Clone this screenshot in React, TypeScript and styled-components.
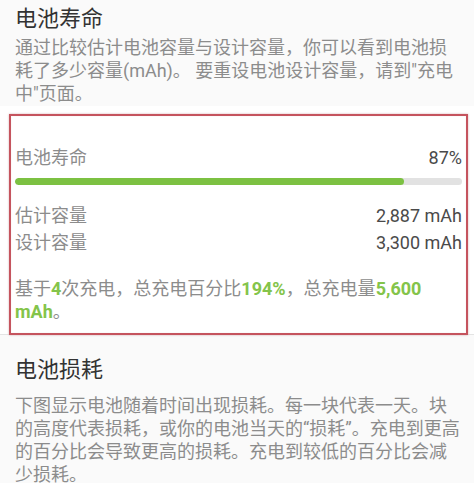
import React from "react";
import styled, { createGlobalStyle } from "styled-components";

const GlobalStyle = createGlobalStyle`
  html, body {
    margin: 0;
    padding: 0;
    background: #fafafa;
  }
  body {
    font-family: Roboto, "Noto Sans CJK SC", "Noto Sans", sans-serif;
    -webkit-font-smoothing: antialiased;
  }
`;

const Page = styled.div`
  width: 474px;
  height: 483px;
  overflow: hidden;
  background: #fafafa;
  display: flex;
  flex-direction: column;
`;

const Section = styled.section<{ $top: number }>`
  padding: ${(p) => p.$top}px 12px 0 15px;
  display: flex;
  flex-direction: column;
`;

const Title = styled.h2`
  margin: 0;
  font-size: 22px;
  line-height: 30px;
  font-weight: 400;
  color: #333333;
`;

const Para = styled.p<{ $gap: number }>`
  margin: ${(p) => p.$gap}px 0 0;
  font-size: 18px;
  line-height: 23px;
  color: #8c8c8c;
  word-break: break-all;
`;

const CardSection = styled.section`
  margin-top: 1.5px;
  padding: 8px 6px 0 9px;
  background: #ffffff;
  border-bottom: 1px solid #e4e4e4;
`;

const Frame = styled.div`
  border: 2px solid #c5545e;
  box-shadow: 0 0 2px rgba(140, 30, 40, 0.35), inset 0 0 1px rgba(140, 30, 40, 0.2);
  padding: 27.5px 4px 10.5px;
  margin-bottom: -1px;
  display: flex;
  flex-direction: column;
`;

const Row = styled.div<{ $gap?: number }>`
  display: flex;
  justify-content: space-between;
  align-items: center;
  margin-top: ${(p) => p.$gap ?? 0}px;
  font-size: 18px;
  line-height: 27px;
`;

const Label = styled.span`
  color: #8c8c8c;
`;

const Value = styled.span`
  color: #4a4a4a;
`;

const Track = styled.div`
  margin-top: 7px;
  height: 7px;
  border-radius: 4px;
  background: #e2e2e2;
  overflow: hidden;
`;

const Fill = styled.div`
  height: 100%;
  border-radius: 4px;
  background: #7cc142;
`;

const Summary = styled.p`
  margin: 21px 0 0;
  font-size: 18px;
  line-height: 23px;
  color: #8c8c8c;
`;

const Hi = styled.b`
  color: #84c44a;
  font-weight: 700;
`;

export default function App() {
  const health = 87;
  return (
    <Page>
      <GlobalStyle />
      <Section $top={4}>
        <Title>电池寿命</Title>
        <Para $gap={1.5}>
          通过比较估计电池容量与设计容量，你可以看到电池损耗了多少容量(mAh)。 要重设电池设计容量，请到"充电中"页面。
        </Para>
      </Section>
      <CardSection>
        <Frame>
          <Row>
            <Label>电池寿命</Label>
            <Value>{health}%</Value>
          </Row>
          <Track>
            <Fill style={{ width: `${health}%` }} />
          </Track>
          <Row $gap={17}>
            <Label>估计容量</Label>
            <Value>2,887 mAh</Value>
          </Row>
          <Row>
            <Label>设计容量</Label>
            <Value>3,300 mAh</Value>
          </Row>
          <Summary>
            基于<Hi>4</Hi>次充电，总充电百分比<Hi>194%</Hi>，总充电量<Hi>5,600 mAh</Hi>。
          </Summary>
        </Frame>
      </CardSection>
      <Section $top={20}>
        <Title>电池损耗</Title>
        <Para $gap={8.5}>
          下图显示电池随着时间出现损耗。每一块代表一天。块的高度代表损耗，或你的电池当天的“损耗”。充电到更高的百分比会导致更高的损耗。充电到较低的百分比会减少损耗。
        </Para>
      </Section>
    </Page>
  );
}
